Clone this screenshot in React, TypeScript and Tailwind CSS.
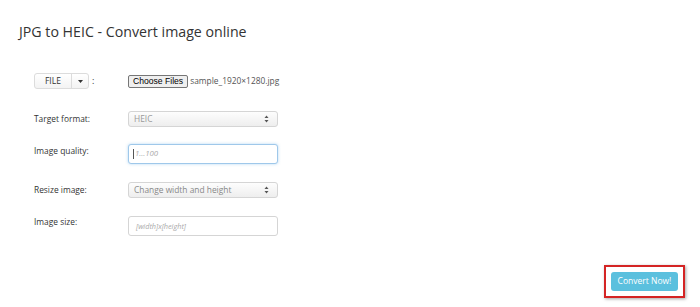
import React from 'react'

function UpDown() {
  return (
    <svg width="5" height="8" viewBox="0 0 5 8" className="shrink-0">
      <path d="M2.5 0.5 L4.5 3 L0.5 3 Z" fill="#555" />
      <path d="M2.5 7.5 L4.5 5 L0.5 5 Z" fill="#555" />
    </svg>
  )
}

function Label({ children, className = '' }: { children: React.ReactNode; className?: string }) {
  return <div className={`w-[94px] shrink-0 text-[8.4px] text-[#333] ${className}`}>{children}</div>
}

function FakeSelect({ value, dark }: { value: string; dark?: boolean }) {
  return (
    <div className="flex h-[16px] w-[150px] items-center justify-between rounded-[3px] border border-[#d5d5d5] bg-gradient-to-b from-[#fdfdfd] to-[#eeeeee] pl-[5px] pr-[8px]">
      <span className={dark ? 'text-[8.4px] text-[#888]' : 'text-[8.4px] text-[#999]'}>{value}</span>
      <UpDown />
    </div>
  )
}

export default function App() {
  return (
    <div className="h-[307px] w-[700px] overflow-hidden bg-white font-['Open_Sans',sans-serif]">
      <h1 className="pl-[19px] pt-[21px] text-[14.2px] leading-[22px] text-[#333]">
        JPG to HEIC - Convert image online
      </h1>

      <div className="mt-[30px] pl-[34px]">
        {/* file row */}
        <div className="flex h-[16px] items-center">
          <div className="flex w-[94px] shrink-0 items-center">
            <div className="flex h-[16px] w-[55px] rounded-[3px] border border-[#dcdcdc] bg-gradient-to-b from-white to-[#f3f3f3]">
              <div className="flex w-[37px] items-center justify-center border-r border-[#dcdcdc] text-[8.6px] text-[#333]">
                FILE
              </div>
              <div className="flex flex-1 items-center justify-center">
                <svg width="5" height="3" viewBox="0 0 5 3">
                  <path d="M0 0 L5 0 L2.5 3 Z" fill="#333" />
                </svg>
              </div>
            </div>
            <span className="ml-[3px] text-[9px] text-[#333]">:</span>
          </div>
          <div className="flex items-center">
            <div className="flex h-[13px] items-center rounded-[2px] border border-[#767676] bg-[#efefef] px-[4px] font-['Liberation_Sans',sans-serif] text-[8.6px] leading-none text-black">
              Choose Files
            </div>
            <span className="ml-[2px] text-[8.4px] text-[#555]">sample_1920×1280.jpg</span>
          </div>
        </div>

        {/* target format */}
        <div className="mt-[22px] flex h-[16px] items-center">
          <Label>Target format:</Label>
          <FakeSelect value="HEIC" />
        </div>

        {/* quality */}
        <div className="mt-[17px] flex h-[20px] items-start">
          <Label className="pt-[1px]">Image quality:</Label>
          <div className="flex h-[20px] w-[150px] items-center rounded-[3px] border border-[#9fc8ea] bg-white pl-[4px] shadow-[0_0_3px_rgba(102,175,233,0.5)]">
            <span className="h-[10px] w-px bg-[#555]" />
            <span className="ml-[1px] text-[7.8px] italic text-[#aaa]">1...100</span>
          </div>
        </div>

        {/* resize */}
        <div className="mt-[18px] flex h-[16px] items-center">
          <Label>Resize image:</Label>
          <FakeSelect value="Change width and height" dark />
        </div>

        {/* size */}
        <div className="mt-[18px] flex h-[20px] items-start">
          <Label>Image size:</Label>
          <div className="flex h-[20px] w-[150px] items-center rounded-[3px] border border-[#d5d5d5] bg-white pl-[7px]">
            <span className="text-[7.3px] italic text-[#aaa]">[width]x[height]</span>
          </div>
        </div>
      </div>

      <div className="mt-[29px] flex justify-end pr-[15px]">
        <div className="border-2 border-[#d42424] px-[5px] py-[5px] shadow-[1px_1px_3px_rgba(0,0,0,0.35)]">
          <div className="flex h-[19px] w-[67px] items-center justify-center rounded-[3px] bg-[#5bc0de] text-[8.5px] text-white">
            Convert Now!
          </div>
        </div>
      </div>
    </div>
  )
}
